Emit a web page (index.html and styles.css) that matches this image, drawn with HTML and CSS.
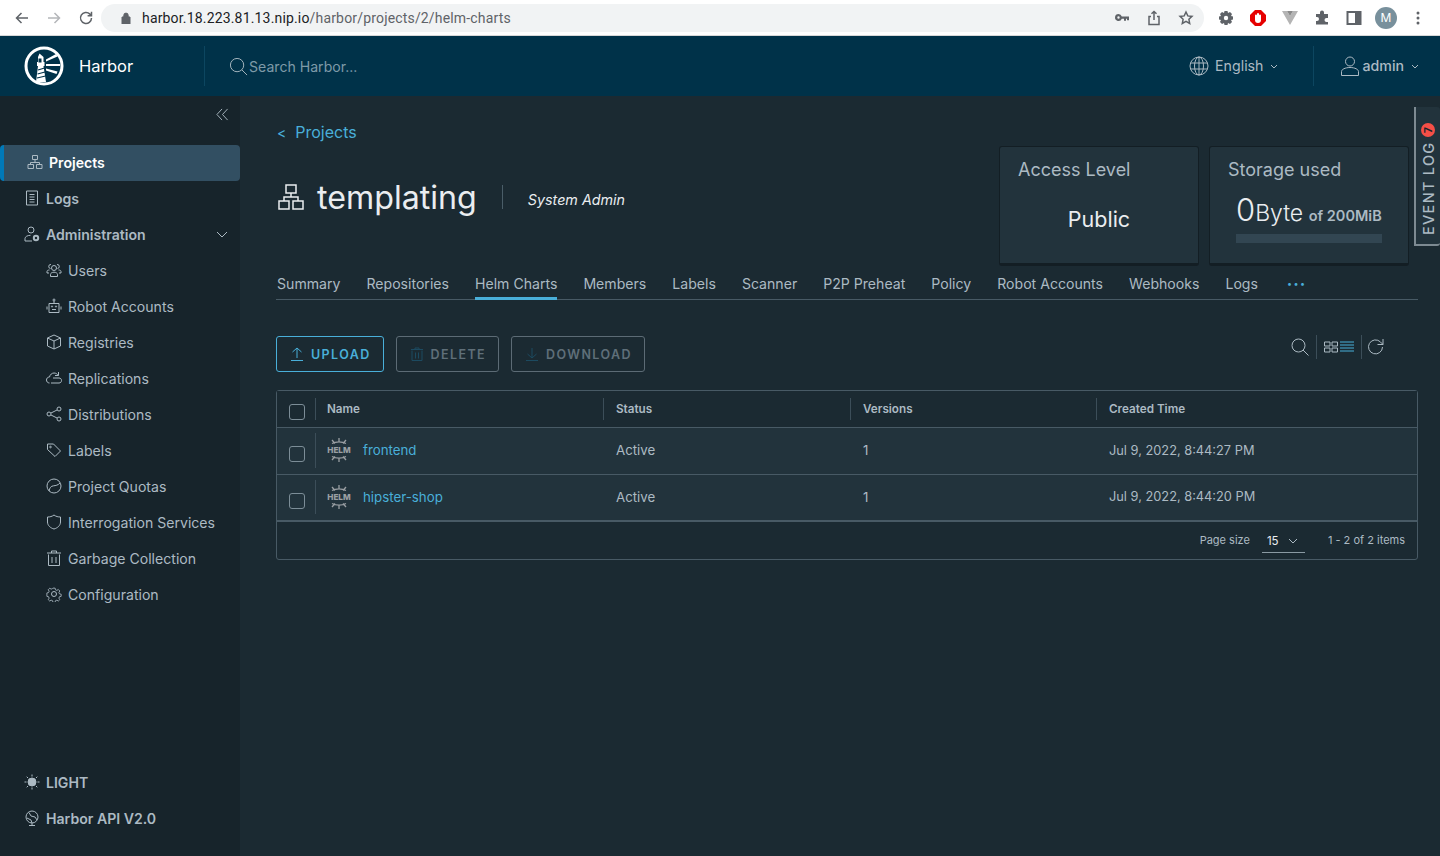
FILE: index.html
```html
<!DOCTYPE html>
<html lang="en">
<head>
  <meta charset="UTF-8" />
  <title>Harbor</title>
  <link rel="stylesheet" href="styles.css">
</head>
<body>
  <div class="chrome">
    <div class="chrome-nav">
      <svg class="ci" viewBox="0 0 16 16"><path d="M14 8H2.500M7.500 3l-5 5 5 5" /></svg>
      <svg class="ci ci-off" viewBox="0 0 16 16"><path d="M2 8h11.500M8.500 3l5 5-5 5" /></svg>
      <svg class="ci" viewBox="0 0 16 16"><path d="M13.500 8a5.500 5.500 0 1 1-1.600-3.900L13.500 5.700M13.500 1.800v3.900H9.600" /></svg>
    </div>
    <div class="omnibox">
      <svg class="lock" viewBox="0 0 10 12"><path d="M1 5h8v7H1zM2.800 5V3.300a2.200 2.200 0 0 1 4.400 0V5" /></svg>
      <span class="url"><b>harbor.18.223.81.13.nip.io</b>/harbor/projects/2/helm-charts</span>
      <div class="omni-icons">
        <svg class="ci ci-fill" viewBox="0 0 16 16"><path d="M4.500 4a3.500 3.500 0 1 0 3.300 4.700H10v2h2v-2h1v1.500h2V6.500H7.800A3.500 3.500 0 0 0 4.500 4zm0 2.300a1.200 1.200 0 1 1 0 2.400 1.200 1.200 0 0 1 0-2.400z" /></svg>
        <svg class="ci" viewBox="0 0 16 16"><path d="M8 10V1.500M5.500 3.800 8 1.500l2.500 2.300M5 6.500H3v8h10v-8h-2" /></svg>
        <svg class="ci" viewBox="0 0 16 16"><path d="m8 2 1.800 3.900 4.200.5-3.100 2.900.8 4.200L8 11.400l-3.700 2.100.8-4.200L2 6.400l4.200-.5z" /></svg>
      </div>
    </div>
    <div class="chrome-ext">
      <svg class="ci ci-fill" viewBox="0 0 16 16"><path d="M6.500 1h3l.5 2 2-1 2 2-1 2 2 .5v3l-2 .5 1 2-2 2-2-1-.5 2h-3l-.5-2-2 1-2-2 1-2-2-.5v-3l2-.5-1-2 2-2 2 1z" /><circle cx="8" cy="8" r="2.200" fill="#fff" /></svg>
      <svg class="ext-stop" viewBox="0 0 16 16"><path d="M5 0h6l5 5v6l-5 5H5l-5-5V5z" fill="#e60000" /><path d="M5 5.500a1 1 0 0 1 2 0V4a1 1 0 0 1 2 0v1.500a1 1 0 0 1 2 0V10a3 3 0 0 1-6 0z" fill="#fff" /></svg>
      <svg class="ext-v" viewBox="0 0 16 14"><path d="M0 0h5l3 5 3-5h5L8 14z" fill="#b4b4b4" /><path d="M5 0h6L8 5z" fill="#8a8a8a" /></svg>
      <svg class="ci ci-fill" viewBox="0 0 16 16"><path d="M6 2.500a2 2 0 0 1 4 0V4h4v4h-1.500a2 2 0 0 0 0 4H14v2.500H2V11h1a2 2 0 0 0 0-4H2V4h4z" /></svg>
      <svg class="ci" viewBox="0 0 16 16"><path d="M1.500 2h13v12h-13z" stroke-width="2" /><path class="ci-solid" d="M9 2h5.500v12H9z" /></svg>
      <span class="avatar">M</span>
      <svg class="ci ci-fill" viewBox="0 0 16 16"><circle cx="8" cy="3" r="1.500" /><circle cx="8" cy="8" r="1.500" /><circle cx="8" cy="13" r="1.500" /></svg>
    </div>
  </div>

  <header class="topbar">
    <div class="brand">
      <svg class="logo" viewBox="0 0 40 40">
        <circle cx="20" cy="20" r="18" fill="none" stroke="#fff" stroke-width="3" />
        <path d="M15.500 7.500l4 3.500v5h1v4h-1l2.500 16h-10l2-16h-1v-4h1v-5z" fill="#fff" />
        <path d="M22 13.500 32 8l1.500 2.500L22 15.500zM22 18h14v2H22zM22 22.500l11.500 3-1 2.500L22 24.500z" fill="#fff" />
        <path d="M14 24l6.500-2M13.500 28l7.500-2M13 32l8.500-2" stroke="#003249" stroke-width="1.200" />
        <rect x="14.500" y="12.500" width="3" height="4" fill="#003249" />
      </svg>
      <span class="brand-name">Harbor</span>
    </div>
    <div class="search">
      <svg class="ic ic-search" viewBox="0 0 20 20"><circle cx="8.500" cy="8.500" r="7" /><path d="m13.500 13.500 5.500 5.500" /></svg>
      <span class="search-text">Search Harbor...</span>
    </div>
    <div class="lang">
      <svg class="ic ic-20" viewBox="0 0 20 20"><circle cx="10" cy="10" r="9" /><ellipse cx="10" cy="10" rx="4.500" ry="9" /><path d="M10 1v18M1.500 7h17M1.500 13h17" /></svg>
      <span>English</span>
      <svg class="caret" viewBox="0 0 8 5"><path d="m1 1 3 3 3-3" /></svg>
    </div>
    <div class="user">
      <svg class="ic ic-20" viewBox="0 0 20 20"><circle cx="10" cy="5.500" r="4.500" /><path d="M1.500 19.500v-4c0-2 3.500-4 8.500-4s8.500 2 8.500 4v4z" /></svg>
      <span>admin</span>
      <svg class="caret" viewBox="0 0 8 5"><path d="m1 1 3 3 3-3" /></svg>
    </div>
  </header>

  <div class="app">
    <aside class="sidebar">
      <div class="collapse">
        <svg class="ic ic-collapse" viewBox="0 0 14 14"><path d="M6.500 1 1 7l5.500 6M12.500 1 7 7l5.500 6" /></svg>
      </div>
      <nav class="nav">
        <a class="nav-item top active">
          <svg class="ic ic-16" viewBox="0 0 16 16"><path d="M5.500 1.500h5v4h-5zM1 10.500h5.500v4H1zM9.500 10.500H15v4H9.500zM8 5.500v3M3.500 10.500v-2h9v2" /></svg>
          Projects
        </a>
        <a class="nav-item top">
          <svg class="ic ic-16" viewBox="0 0 16 16"><path d="M2.500 1h11v14h-11zM5.500 4.500h5M5.500 7h5M5.500 9.500h5M5.500 12h5" /></svg>
          Logs
        </a>
        <a class="nav-item top">
          <svg class="ic ic-16" viewBox="0 0 16 16"><circle cx="7" cy="4" r="3" /><path d="M1 15v-2.500c0-1.800 2.500-3.200 5.500-3.200M1 15h7" /><circle cx="12" cy="12" r="2.200" stroke-width="2" /></svg>
          Administration
          <svg class="ic nav-caret" viewBox="0 0 12 7"><path d="m1 1 5 5 5-5" /></svg>
        </a>
        <a class="nav-item sub">
          <svg class="ic ic-16" viewBox="0 0 16 16"><circle cx="8" cy="6" r="2.500" /><path d="M4.500 14.500v-2c0-1.300 1.500-2.300 3.500-2.300s3.500 1 3.500 2.300v2zM4.500 6.500a2 2 0 1 1 .5-4M11.500 6.500a2 2 0 1 0-.5-4M3 11H1V9.500C1 8.500 2 8 3.500 8M13 11h2V9.500C15 8.500 14 8 12.500 8" /></svg>
          Users
        </a>
        <a class="nav-item sub">
          <svg class="ic ic-16" viewBox="0 0 16 16"><path d="M3 5.500h10v9H3zM8 5.500V3M1 8.500v3M15 8.500v3M6 11.500h4" /><circle cx="8" cy="2" r="1" /><circle cx="6" cy="8.500" r=".6" /><circle cx="10" cy="8.500" r=".6" /></svg>
          Robot Accounts
        </a>
        <a class="nav-item sub">
          <svg class="ic ic-16" viewBox="0 0 16 16"><path d="m8 1 6.500 3v8L8 15l-6.500-3V4zM1.500 4 8 7l6.500-3M8 7v8" /></svg>
          Registries
        </a>
        <a class="nav-item sub">
          <svg class="ic ic-16" viewBox="0 0 16 16"><path d="M3.500 13C1.500 13 .5 11.500.5 10s1-3 3-3c.5-2.500 2.500-4 4.500-4s3.500 1 4 2.500M5 13h8c1.500 0 2.500-1 2.500-2.500S14.500 8 13 8H7M9 5.500h3.500V2" /></svg>
          Replications
        </a>
        <a class="nav-item sub">
          <svg class="ic ic-16" viewBox="0 0 16 16"><circle cx="3" cy="8" r="2" /><circle cx="13" cy="3" r="2" /><circle cx="13" cy="13" r="2" /><path d="m5 7 6-3M5 9l6 3" /></svg>
          Distributions
        </a>
        <a class="nav-item sub">
          <svg class="ic ic-16" viewBox="0 0 16 16"><path d="M1.500 2h6l7 7-5.500 5.500-7.500-7z" /><circle cx="4.500" cy="5" r=".8" /></svg>
          Labels
        </a>
        <a class="nav-item sub">
          <svg class="ic ic-16" viewBox="0 0 16 16"><circle cx="8" cy="8" r="7" /><path d="M3 13c.5-3 2-5 4.500-5.200 2-.2 4.500-.5 6.500-2.800" /></svg>
          Project Quotas
        </a>
        <a class="nav-item sub">
          <svg class="ic ic-16" viewBox="0 0 16 16"><path d="M8 1c2 1.500 4 2 6.500 2v5c0 3.500-3 6-6.500 7-3.500-1-6.500-3.500-6.500-7V3C4 3 6 2.500 8 1z" /></svg>
          Interrogation Services
        </a>
        <a class="nav-item sub">
          <svg class="ic ic-16" viewBox="0 0 16 16"><path d="M2.500 4.500v11h11v-11M1 3h14M5.500 3V1h5v2M6 7v6M10 7v6" /></svg>
          Garbage Collection
        </a>
        <a class="nav-item sub">
          <svg class="ic ic-16" viewBox="0 0 16 16"><circle cx="8" cy="8" r="2.500" /><path d="M6.700 1h2.600l.4 2 1.700.7 1.700-1.100 1.800 1.800-1.100 1.700.7 1.700 2 .4v2.600l-2 .4-.7 1.700 1.100 1.700-1.800 1.800-1.700-1.100-1.700.7-.4 2H6.700l-.4-2-1.700-.7-1.700 1.100-1.800-1.800 1.100-1.700-.7-1.700-2-.4V6.700l2-.4.7-1.700-1.100-1.700 1.800-1.800 1.700 1.100 1.700-.7z" transform="translate(1.300 1.300) scale(.84)" /></svg>
          Configuration
        </a>
      </nav>
      <div class="side-foot">
        <a class="nav-item top">
          <svg class="ic ic-16" viewBox="0 0 16 16"><circle class="ic-solid" cx="8" cy="8" r="4" /><path d="M8 .5v2M8 13.500v2M.5 8h2M13.500 8h2M2.700 2.700l1.400 1.400M11.900 11.900l1.400 1.400M2.700 13.300l1.400-1.400M11.900 4.100l1.400-1.400" /></svg>
          LIGHT
        </a>
        <a class="nav-item top">
          <svg class="ic ic-16" viewBox="0 0 16 16"><circle cx="8" cy="7" r="6" /><path d="M5 2.500 7 6l4 1 2 3M3 8l4 2 1 3M5 15.500h6M8 13v2.500" /></svg>
          Harbor API V2.0
        </a>
      </div>
    </aside>

    <main class="content">
      <div class="page-head">
        <div class="page-title">
          <a class="crumb"><span class="crumb-arrow">&lt;</span>Projects</a>
          <div class="title-row">
            <svg class="ic title-icon" viewBox="0 0 28 28"><path d="M9 2h10v8H9zM2 18h10v8H2zM16 18h10v8H16zM14 10v4M7 18v-4h14v4" /></svg>
            <h1>templating</h1>
            <span class="role">System Admin</span>
          </div>
        </div>
        <div class="cards">
          <section class="card">
            <h3>Access Level</h3>
            <div class="card-public">Public</div>
          </section>
          <section class="card">
            <h3>Storage used</h3>
            <div class="usage">
              <span class="usage-num">0</span><span class="usage-unit">Byte</span>
              <span class="usage-of">of 200MiB</span>
            </div>
            <div class="usage-bar"></div>
          </section>
        </div>
      </div>

      <ul class="tabs">
        <li>Summary</li>
        <li>Repositories</li>
        <li class="current">Helm Charts</li>
        <li>Members</li>
        <li>Labels</li>
        <li>Scanner</li>
        <li>P2P Preheat</li>
        <li>Policy</li>
        <li>Robot Accounts</li>
        <li>Webhooks</li>
        <li>Logs</li>
        <li class="more">&#8226;&#8226;&#8226;</li>
      </ul>

      <div class="toolbar">
        <button class="btn primary">
          <svg class="ic ic-btn" viewBox="0 0 14 14"><path d="M7 11V1M2.500 5 7 1l4.500 4M1 13.500h12" /></svg>
          UPLOAD
        </button>
        <button class="btn">
          <svg class="ic ic-btn" viewBox="0 0 14 14"><path d="M2 3.500v10h10v-10M1 2.500h12M5 2.500V1h4v1.500M5.500 5.500v6M8.500 5.500v6" /></svg>
          DELETE
        </button>
        <button class="btn">
          <svg class="ic ic-btn" viewBox="0 0 14 14"><path d="M7 1v10M2.500 7 7 11l4.500-4M1 13.500h12" /></svg>
          DOWNLOAD
        </button>
        <div class="tools">
          <svg class="ic ic-tool" viewBox="0 0 18 18"><circle cx="7.500" cy="7.500" r="6.500" /><path d="m12 12 5.500 5.500" /></svg>
          <span class="tool-sep"></span>
          <svg class="ic ic-view ic-cards" viewBox="0 0 14 12"><path d="M.5 1h5.500v4H.5zM8 1h5.500v4H8zM.5 7h5.500v4H.5zM8 7h5.500v4H8z" /></svg>
          <svg class="ic ic-view ic-lines" viewBox="0 0 14 12"><path d="M0 1h14M0 4h14M0 7h14M0 10h14" /></svg>
          <span class="tool-sep tool-sep-r"></span>
          <svg class="ic ic-tool" viewBox="0 0 18 18"><path d="M15.500 9a7 7 0 1 1-2-5l2.500 2.500M16 1v5.500h-5.500" /></svg>
        </div>
      </div>

      <div class="grid">
        <div class="row head">
          <div class="cell check"><span class="box"></span></div>
          <div class="cell">Name</div>
          <div class="cell">Status</div>
          <div class="cell">Versions</div>
          <div class="cell">Created Time</div>
        </div>
        <div class="row">
          <div class="cell check"><span class="box"></span></div>
          <div class="cell name">
            <svg class="helm" viewBox="0 0 24 24"><path d="M12 0v4M5 2l3 3.500M19 2l-3 3.500M5 5.500c4-2 10-2 14 0M12 24v-4M5 22l3-3.500M19 22l-3-3.500M5 18.500c4 2 10 2 14 0" /><text x="12" y="15" text-anchor="middle">HELM</text></svg>
            <a>frontend</a>
          </div>
          <div class="cell">Active</div>
          <div class="cell">1</div>
          <div class="cell time">Jul 9, 2022, 8:44:27 PM</div>
        </div>
        <div class="row last">
          <div class="cell check"><span class="box"></span></div>
          <div class="cell name">
            <svg class="helm" viewBox="0 0 24 24"><path d="M12 0v4M5 2l3 3.500M19 2l-3 3.500M5 5.500c4-2 10-2 14 0M12 24v-4M5 22l3-3.500M19 22l-3-3.500M5 18.500c4 2 10 2 14 0" /><text x="12" y="15" text-anchor="middle">HELM</text></svg>
            <a>hipster-shop</a>
          </div>
          <div class="cell">Active</div>
          <div class="cell">1</div>
          <div class="cell time">Jul 9, 2022, 8:44:20 PM</div>
        </div>
        <div class="grid-foot">
          <span>Page size</span>
          <span class="size-select">15
            <svg class="ic size-caret" viewBox="0 0 10 6"><path d="m1 1 4 4 4-4" /></svg>
          </span>
          <span class="count">1 - 2 of 2 items</span>
        </div>
      </div>

      <div class="event-log">
        <span class="event-badge">7</span>
        EVENT LOG
      </div>
    </main>
  </div>
</body>
</html>
```

FILE: styles.css
```css
html, body {
  height: 100%;
}

body {
  margin: 0;
  font-family: "Inter", "Liberation Sans", sans-serif;
  background: #1b2a32;
  color: #acbac3;
  display: flex;
  flex-direction: column;
  overflow: hidden;
}

svg {
  display: block;
  flex: none;
}

/* browser chrome */
.chrome {
  height: 35px;
  background: #fff;
  border-bottom: 1px solid #d8d8d8;
  display: flex;
  align-items: center;
  flex: none;
}

.chrome-nav {
  display: flex;
  gap: 16px;
  padding-left: 14px;
  width: 101px;
  box-sizing: border-box;
}

.ci {
  width: 16px;
  height: 16px;
  fill: none;
  stroke: #5f6368;
  stroke-width: 1.5;
}

.ci-off {
  stroke: #b4b6b9;
}

.ci-fill {
  fill: #5f6368;
  stroke: none;
}

.ci-solid {
  fill: #5f6368;
  stroke: none;
}

.omnibox {
  width: 1103px;
  height: 28px;
  background: #f1f3f4;
  border-radius: 14px;
  display: flex;
  align-items: center;
  padding: 0 10px 0 20px;
  box-sizing: border-box;
}

.lock {
  width: 10px;
  height: 12px;
  fill: #5f6368;
  stroke: #5f6368;
}

.url {
  margin-left: 11px;
  font-family: "Roboto", sans-serif;
  font-size: 14px;
  letter-spacing: .17px;
  color: #5f6368;
}

.url b {
  font-weight: 400;
  color: #202124;
}

.omni-icons {
  margin-left: auto;
  display: flex;
  gap: 16px;
}

.chrome-ext {
  display: flex;
  align-items: center;
  gap: 16px;
  padding-left: 14px;
}

.ext-stop {
  width: 16px;
  height: 16px;
}

.ext-v {
  width: 16px;
  height: 14px;
}

.avatar {
  width: 22px;
  height: 22px;
  margin: 0 -3px;
  border-radius: 50%;
  background: #78909c;
  color: #fff;
  font-size: 12px;
  display: flex;
  align-items: center;
  justify-content: center;
}

/* harbor header */
.topbar {
  height: 60px;
  flex: none;
  background: #003249;
  display: flex;
  align-items: center;
  color: #acbac3;
}

.brand {
  width: 205px;
  height: 40px;
  padding-left: 24px;
  box-sizing: border-box;
  display: flex;
  align-items: center;
  gap: 15px;
  border-right: 1px solid #0c4660;
}

.logo {
  width: 40px;
  height: 40px;
}

.brand-name {
  font-size: 16.500px;
  font-weight: 400;
  color: #fff;
}

.search {
  display: flex;
  align-items: center;
  gap: 1px;
  padding-left: 24px;
}

.search-text {
  font-size: 14.100px;
  color: #7e9aa8;
}

.ic {
  fill: none;
  stroke: #acbac3;
  stroke-width: 1;
}

.ic-solid {
  fill: #acbac3;
}

.ic-search {
  width: 19px;
  height: 19px;
}

.ic-20 {
  width: 20px;
  height: 20px;
}

.caret {
  width: 8px;
  height: 5px;
  fill: none;
  stroke: #acbac3;
}

.lang,
.user {
  display: flex;
  align-items: center;
  font-size: 14.200px;
}

.lang span,
.user span {
  padding-bottom: 1px;
}

.lang {
  margin-left: auto;
  height: 40px;
  gap: 6px;
  padding-right: 35px;
  border-right: 1px solid #0c4660;
}

.lang .caret {
  margin-left: 1px;
}

.user {
  gap: 2px;
  padding: 0 21px 0 26px;
  font-weight: 500;
}

.user .caret {
  margin-left: 5px;
}

/* layout */
.app {
  flex: 1;
  display: flex;
  min-height: 0;
}

.sidebar {
  width: 240px;
  flex: none;
  background: #17242b;
  display: flex;
  flex-direction: column;
  padding-bottom: 19px;
  box-sizing: border-box;
}

.collapse {
  height: 49px;
  display: flex;
  align-items: center;
  justify-content: flex-end;
  padding: 0 11px 13px 0;
  box-sizing: border-box;
  flex: none;
}

.ic-collapse {
  width: 13px;
  height: 13px;
}

.nav-item {
  height: 36px;
  display: flex;
  align-items: center;
  font-size: 14.100px;
  color: #acbac3;
  padding-bottom: 2px;
  box-sizing: border-box;
}

.top {
  font-weight: 600;
  padding-left: 24px;
  gap: 6px;
}

.sub {
  padding-left: 46px;
  gap: 6px;
}

.ic-16 {
  width: 16px;
  height: 16px;
}

.active {
  background: #324f62;
  color: #fff;
  border-left: 4px solid #0079b8;
  border-radius: 4px;
  padding-left: 23px;
}

.nav-caret {
  width: 12px;
  height: 7px;
  margin-left: auto;
  margin-right: 12px;
}

.side-foot {
  margin-top: auto;
}

/* content */
.content {
  flex: 1;
  min-width: 0;
  padding: 0 22px 0 36px;
  position: relative;
}

.page-head {
  height: 174px;
  display: flex;
  justify-content: space-between;
  padding-top: 50px;
  box-sizing: border-box;
}

.page-title {
  margin-top: -26px;
  padding-left: 1px;
}

.crumb {
  display: block;
  font-size: 16px;
  color: #49afd9;
  line-height: 24px;
}

.crumb-arrow {
  margin-right: 9px;
  font-size: 14px;
}

.title-row {
  display: flex;
  align-items: center;
  margin-top: 31px;
}

.title-icon {
  width: 28px;
  height: 28px;
  stroke: #eaedf0;
  stroke-width: 1.500;
}

h1 {
  margin: 0 0 0 12px;
  padding: 2px 25px 0 0;
  font-size: 32.200px;
  font-weight: 400;
  line-height: 40px;
  color: #eaedf0;
}

.role {
  border-left: 1px solid #4a5d68;
  height: 24px;
  padding-left: 25px;
  font-size: 14.300px;
  font-style: italic;
  color: #eaedf0;
  line-height: 30px;
}

.cards {
  display: flex;
  gap: 10px;
  margin-right: 9px;
  height: 120px;
}

.card {
  width: 200px;
  height: 120px;
  box-sizing: border-box;
  background: #22333c;
  border: 1px solid #131e24;
  border-bottom: 3px solid #131e24;
  border-radius: 3px;
  padding: 12px 18px;
}

.card h3 {
  margin: 0;
  font-size: 18px;
  font-weight: 400;
  line-height: 22px;
  color: #acbac3;
}

.card-public {
  margin-top: 23px;
  text-align: center;
  font-size: 21.500px;
  line-height: 30px;
  color: #eaedf0;
}

.usage {
  margin-top: 11px;
  padding-left: 8px;
  color: #eaedf0;
  white-space: nowrap;
  line-height: 36px;
}

.usage-num {
  font-size: 31px;
  font-weight: 300;
}

.usage-unit {
  font-size: 23px;
  font-weight: 300;
}

.usage-of {
  font-size: 14.500px;
  font-weight: 600;
  color: #acbac3;
  margin-left: 1px;
}

.usage-bar {
  height: 9px;
  margin: 0 8px;
  background: #324652;
}

/* tabs */
.tabs {
  list-style: none;
  margin: 0;
  padding: 0 0 0 1px;
  height: 29px;
  display: flex;
  gap: 26px;
  border-bottom: 1px solid #485a65;
}

.tabs li {
  font-size: 14.100px;
  line-height: 28px;
  height: 29px;
  box-sizing: border-box;
  color: #acbac3;
}

.tabs .current {
  border-bottom: 3px solid #49afd9;
  height: 30px;
}

.tabs .more {
  margin-left: 3px;
  color: #49afd9;
  font-size: 9px;
  letter-spacing: 1.500px;
}

/* toolbar */
.toolbar {
  display: flex;
  align-items: flex-start;
  gap: 12px;
  margin-top: 36px;
  height: 54px;
}

.btn {
  height: 36px;
  padding: 0 12px 0 13px;
  display: flex;
  align-items: center;
  gap: 7px;
  background: none;
  border: 1px solid #5c6b75;
  border-radius: 3px;
  font-family: inherit;
  font-size: 12.500px;
  font-weight: 600;
  letter-spacing: 1.400px;
  color: #5f6f79;
}

.btn .ic {
  stroke: #1c4a60;
}

.btn.primary {
  border-color: #49afd9;
  color: #49afd9;
}

.btn.primary .ic {
  stroke: #49afd9;
}

.ic-btn {
  width: 14px;
  height: 14px;
}

.tools {
  margin-left: auto;
  display: flex;
  align-items: center;
  height: 24px;
  margin-top: -1px;
  padding-right: 33px;
}

.ic-tool {
  width: 18px;
  height: 18px;
}

.tool-sep {
  width: 1px;
  height: 24px;
  background: #3c4e59;
  margin: 0 7px;
}

.tool-sep-r {
  margin: 0 5px 0 7px;
}

.ic-view {
  width: 14px;
  height: 12px;
}

.ic-cards {
  margin-right: 2px;
}

.ic-lines {
  stroke: #49afd9;
}

/* helm charts grid */
.grid {
  border: 1px solid #485a65;
  border-radius: 3px;
  font-size: 13.300px;
}

.row {
  display: grid;
  grid-template-columns: 38px 288px 247px 246px 1fr;
  height: 47px;
  background: #22333c;
  border-bottom: 1px solid #485a65;
  box-sizing: border-box;
}

.row.last {
  border-bottom-width: 2px;
}

.row.head {
  height: 37px;
  background: #1b2a32;
  font-size: 11.700px;
  font-weight: 600;
}

.cell {
  display: flex;
  align-items: center;
  padding-left: 13px;
  position: relative;
}

.row:not(.head) .cell {
  padding-bottom: 2px;
}

.cell:nth-child(2) {
  padding-left: 12px;
}

.time {
  font-size: 12.800px;
}

.cell::before {
  content: "";
  position: absolute;
  left: 0;
  top: 7px;
  bottom: 7px;
  width: 1px;
  background: #3c4e59;
}

.row:not(.head) .cell:not(:nth-child(2))::before {
  display: none;
}

.row:not(.head) .cell:nth-child(2)::before {
  top: 5px;
  bottom: 6px;
}

.cell.check {
  padding-left: 12px;
}

.cell.check::before {
  display: none;
}

.box {
  width: 14px;
  height: 14px;
  border: 1px solid #7c8d97;
  border-radius: 3px;
  margin-top: 8px;
}

.row.head .box {
  margin-top: 5px;
}

.name {
  gap: 12px;
}

.name a {
  color: #49afd9;
}

.helm {
  width: 24px;
  height: 24px;
  fill: none;
  stroke: #9a9fa3;
  stroke-width: 1.300;
}

.helm text {
  font-size: 8.200px;
  font-weight: 800;
  fill: #9a9fa3;
  stroke: none;
}

.grid-foot {
  height: 37px;
  padding-bottom: 2px;
  box-sizing: border-box;
  display: flex;
  align-items: center;
  justify-content: flex-end;
  padding-right: 12px;
  font-size: 11px;
}

.size-select {
  width: 43px;
  height: 24px;
  margin: 2px 23px 0 12px;
  padding: 1px 0 0 5px;
  box-sizing: border-box;
  border-bottom: 1px solid #8a9aa3;
  font-size: 11.500px;
  color: #eaedf0;
  display: flex;
  align-items: center;
  gap: 9px;
}

.size-caret {
  width: 10px;
  height: 6px;
}

/* rotated tab that sits over the right edge */
.event-log {
  position: absolute;
  top: 11px;
  right: 0;
  width: 26px;
  height: 139px;
  padding-top: 9px;
  box-sizing: border-box;
  background: #22333c;
  border-right: 2px solid #7d8a92;
  border-top: 2px solid #7d8a92;
  border-radius: 3px 0 0 3px;
  writing-mode: vertical-rl;
  transform: rotate(180deg);
  display: flex;
  align-items: center;
  justify-content: flex-start;
  gap: 4px;
  font-size: 14.500px;
  letter-spacing: 1.300px;
  font-weight: 500;
  color: #acbac3;
}

.event-badge {
  order: 2;
  width: 14px;
  height: 14px;
  border-radius: 50%;
  background: #f54f47;
  color: #17242b;
  font-size: 10px;
  font-weight: 700;
  letter-spacing: 0;
  display: flex;
  align-items: center;
  justify-content: center;
}
```
